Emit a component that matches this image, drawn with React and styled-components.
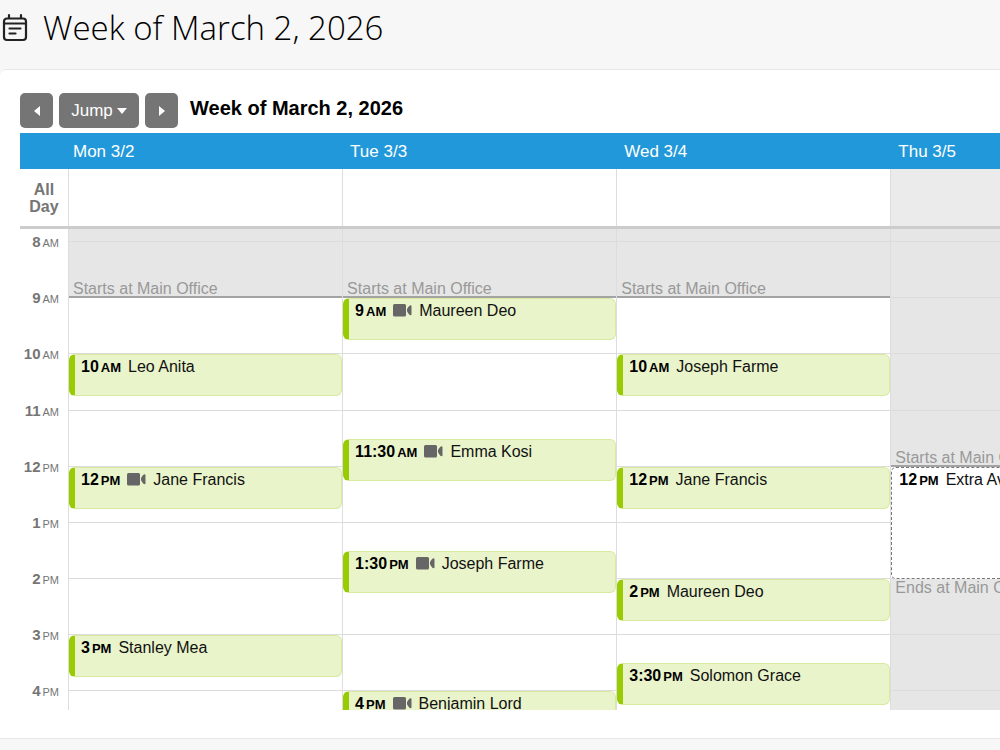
import React from "react";
import styled, { createGlobalStyle } from "styled-components";

const GlobalStyle = createGlobalStyle`
  *, *::before, *::after { box-sizing: border-box; }
  body {
    margin: 0;
    background: #f7f7f7;
    color: #000;
    font-family: "Liberation Sans", Arial, sans-serif;
    font-size: 16px;
    overflow-x: hidden;
  }
`;

const DAY_COLUMNS = "48px repeat(3, minmax(0, 5fr)) minmax(0, 2fr)";

const PageHeader = styled.header`
  display: flex;
  align-items: center;
  gap: 15px;
  height: 69px;
  padding: 0 2px 14px;
`;

const PageTitle = styled.h1`
  margin: 0;
  font-family: "Open Sans", sans-serif;
  font-size: 33px;
  font-weight: 300;
  line-height: 48px;
  white-space: nowrap;
`;

const CalendarIcon = styled.svg`
  flex: none;
  width: 26px;
  height: 28px;
  fill: none;
  stroke: #222;
  stroke-width: 2.2;
  stroke-linecap: round;
`;

const Card = styled.main`
  background: #fff;
  border: solid #e8e8e8;
  border-width: 1px 0;
  border-top-left-radius: 6px;
  padding: 23px 0 28px 20px;
`;

const Toolbar = styled.div`
  display: flex;
  gap: 6px;
  height: 40px;
`;

const ToolButton = styled.button`
  display: flex;
  align-items: center;
  justify-content: center;
  gap: 4px;
  width: ${(p) => (p.$wide ? "80px" : "33px")};
  height: 35px;
  padding: 0;
  border: 0;
  border-radius: 5px;
  background: #757575;
  color: #fff;
  font: 17px "Liberation Sans", Arial, sans-serif;
`;

const Arrow = styled.svg`
  fill: #fff;
`;

const RangeTitle = styled.h2`
  margin: 0 0 0 6px;
  font-size: 20px;
  font-weight: 700;
  line-height: 30px;
`;

const DayHeader = styled.div`
  display: grid;
  grid-template-columns: ${DAY_COLUMNS};
  height: 36px;
  background: #2198d9;
  color: #fff;
  font-size: 17px;
  line-height: 38px;
`;

const DayName = styled.div`
  padding-left: ${(p) => (p.$first ? "5px" : "8px")};
  white-space: nowrap;
`;

const AllDayRow = styled.div`
  display: grid;
  grid-template-columns: ${DAY_COLUMNS};
  height: 60px;
  border-bottom: 3px solid #ccc;
`;

const AllDayLabel = styled.div`
  align-self: center;
  color: #757575;
  font-weight: 700;
  line-height: 17px;
  text-align: center;
`;

const AllDayCell = styled.div`
  border-left: 1px solid #ddd;
  background: ${(p) => (p.$closed ? "#ebebeb" : "#fff")};
`;

const Viewport = styled.div`
  height: 481px;
  overflow: hidden;
`;

/* One 12px strip before 8 AM, then quarter-hour rows up to 8 PM. */
const TimeGrid = styled.div`
  display: grid;
  grid-template-columns: ${DAY_COLUMNS};
  height: 686px;
`;

const Quarters = styled.div`
  display: grid;
  grid-template-rows: 12px repeat(48, minmax(0, 1fr));
  grid-template-columns: minmax(0, 1fr);
  min-width: 0;
`;

const DayColumn = styled(Quarters)`
  border-left: 1px solid #ddd;
`;

const HourLabel = styled.div`
  grid-column: 1;
  grid-row: ${(p) => `${p.$row} / span 4`};
  margin-top: -9px;
  padding-right: 9px;
  color: #757575;
  font-size: 15px;
  font-weight: 700;
  line-height: 20px;
  text-align: right;
`;

const Meridiem = styled.span`
  margin-left: 2px;
  font-size: 11px;
  font-weight: 400;
`;

const HourLine = styled.div`
  grid-column: 1;
  grid-row: ${(p) => `${p.$row} / span 4`};
  border-top: 1px solid #dcdcdc;
`;

const Closed = styled.div`
  grid-column: 1;
  grid-row: ${(p) => `${p.$from} / ${p.$to}`};
  display: flex;
  align-items: ${(p) => (p.$after ? "flex-start" : "flex-end")};
  padding: 2px 0 0 4px;
  overflow: hidden;
  background: #e6e6e6;
  color: #999;
  line-height: 16px;
  white-space: nowrap;
`;

const OpeningLine = styled.div`
  grid-column: 1;
  grid-row: ${(p) => p.$row};
  border-top: 2px solid #a3a3a3;
  margin-top: -1px;
`;

const Event = styled.article`
  grid-column: 1;
  grid-row: ${(p) => `${p.$row} / span ${p.$span}`};
  display: flex;
  align-items: flex-start;
  margin: 1px 0 -1px;
  padding: 2px 0 0 6px;
  overflow: hidden;
  border: 1px solid #d7eaa0;
  border-left: 6px solid #99cc00;
  border-radius: 6px;
  background: #e9f4cb;
  color: #111;
  line-height: 20px;
  white-space: nowrap;
`;

const Availability = styled(Event)`
  padding-left: 7px;
  border: 1px dashed #777;
  border-right: 0;
  border-radius: 5px 0 0 5px;
  background: #fff;
`;

const Time = styled.time`
  margin-right: 7px;
  color: #000;
  font-weight: 700;
`;

const TimeMeridiem = styled.span`
  margin-left: 2px;
  font-size: 13px;
`;

const VideoIcon = styled.svg`
  flex: none;
  margin: 3px 7px 0 0;
  fill: #666;
`;

const OPEN_ROW = 6;

const days = [
  {
    name: "Mon 3/2",
    events: [
      { row: 10, time: "10", half: "AM", who: "Leo Anita" },
      { row: 18, time: "12", half: "PM", who: "Jane Francis", video: true },
      { row: 30, time: "3", half: "PM", who: "Stanley Mea" },
    ],
  },
  {
    name: "Tue 3/3",
    events: [
      { row: 6, time: "9", half: "AM", who: "Maureen Deo", video: true },
      { row: 16, time: "11:30", half: "AM", who: "Emma Kosi", video: true },
      { row: 24, time: "1:30", half: "PM", who: "Joseph Farme", video: true },
      { row: 34, time: "4", half: "PM", who: "Benjamin Lord", video: true },
    ],
  },
  {
    name: "Wed 3/4",
    events: [
      { row: 10, time: "10", half: "AM", who: "Joseph Farme" },
      { row: 18, time: "12", half: "PM", who: "Jane Francis" },
      { row: 26, time: "2", half: "PM", who: "Maureen Deo" },
      { row: 32, time: "3:30", half: "PM", who: "Solomon Grace" },
    ],
  },
  { name: "Thu 3/5", special: true, events: [] },
];

const hours = [8, 9, 10, 11, 12, 1, 2, 3, 4].map((hour, i) => ({
  hour,
  half: i < 4 ? "AM" : "PM",
  row: 2 + i * 4,
}));

function TimeText({ time, half }) {
  return (
    <Time>
      {time}
      <TimeMeridiem>{half}</TimeMeridiem>
    </Time>
  );
}

function Day({ day }) {
  return (
    <DayColumn as="section" aria-label={day.name}>
      {day.special ? (
        <>
          <Closed $from={1} $to={18}>Starts at Main Office</Closed>
          <Closed $from={26} $to={50} $after>Ends at Main Office</Closed>
        </>
      ) : (
        <Closed $from={1} $to={OPEN_ROW}>Starts at Main Office</Closed>
      )}
      {hours.map((h) => (
        <HourLine key={h.row} $row={h.row} />
      ))}
      <OpeningLine $row={day.special ? 18 : OPEN_ROW} />
      {day.special && (
        <Availability $row={18} $span={8}>
          <TimeText time="12" half="PM" />
          <span>Extra Availability</span>
        </Availability>
      )}
      {day.events.map((e) => (
        <Event key={e.row} $row={e.row} $span={3}>
          <TimeText time={e.time} half={e.half} />
          {e.video && (
            <VideoIcon width="19" height="13" viewBox="0 0 19 13" role="img" aria-label="Video">
              <rect width="13" height="12.500" rx="1.500" />
              <path d="M14 5.200C15 3.500 16 1.500 17.500 1.300Q18.500 1.200 18.500 2.200V10.300Q18.500 11.300 17.500 11.200C16 11 15 9 14 7.300Z" />
            </VideoIcon>
          )}
          <span>{e.who}</span>
        </Event>
      ))}
    </DayColumn>
  );
}

export default function App() {
  return (
    <>
      <GlobalStyle />
      <PageHeader>
        <CalendarIcon viewBox="0 0 26 28" aria-hidden="true">
          <rect x="2" y="4.500" width="22" height="21.500" rx="3" />
          <path d="M7 1.200V4M19 1.200V4M2 9.500H24M7.500 14.500H18.500M7.500 19.500H13.500" />
        </CalendarIcon>
        <PageTitle>Week of March 2, 2026</PageTitle>
      </PageHeader>
      <Card>
        <Toolbar>
          <ToolButton type="button" aria-label="Previous week">
            <Arrow width="6" height="10" viewBox="0 0 6 10"><path d="M6 0V10L0 5Z" /></Arrow>
          </ToolButton>
          <ToolButton type="button" $wide>
            Jump
            <Arrow width="10" height="6" viewBox="0 0 10 6"><path d="M0 0H10L5 6Z" /></Arrow>
          </ToolButton>
          <ToolButton type="button" aria-label="Next week">
            <Arrow width="6" height="10" viewBox="0 0 6 10"><path d="M0 0V10L6 5Z" /></Arrow>
          </ToolButton>
          <RangeTitle>Week of March 2, 2026</RangeTitle>
        </Toolbar>
        <DayHeader>
          <span />
          {days.map((d, i) => (
            <DayName key={d.name} $first={i === 0}>{d.name}</DayName>
          ))}
        </DayHeader>
        <AllDayRow>
          <AllDayLabel>All<br />Day</AllDayLabel>
          {days.map((d) => (
            <AllDayCell key={d.name} $closed={d.special} />
          ))}
        </AllDayRow>
        <Viewport>
          <TimeGrid>
            <Quarters>
              {hours.map((h) => (
                <HourLabel key={h.row} $row={h.row}>
                  {h.hour}
                  <Meridiem>{h.half}</Meridiem>
                </HourLabel>
              ))}
            </Quarters>
            {days.map((d) => (
              <Day key={d.name} day={d} />
            ))}
          </TimeGrid>
        </Viewport>
      </Card>
    </>
  );
}
